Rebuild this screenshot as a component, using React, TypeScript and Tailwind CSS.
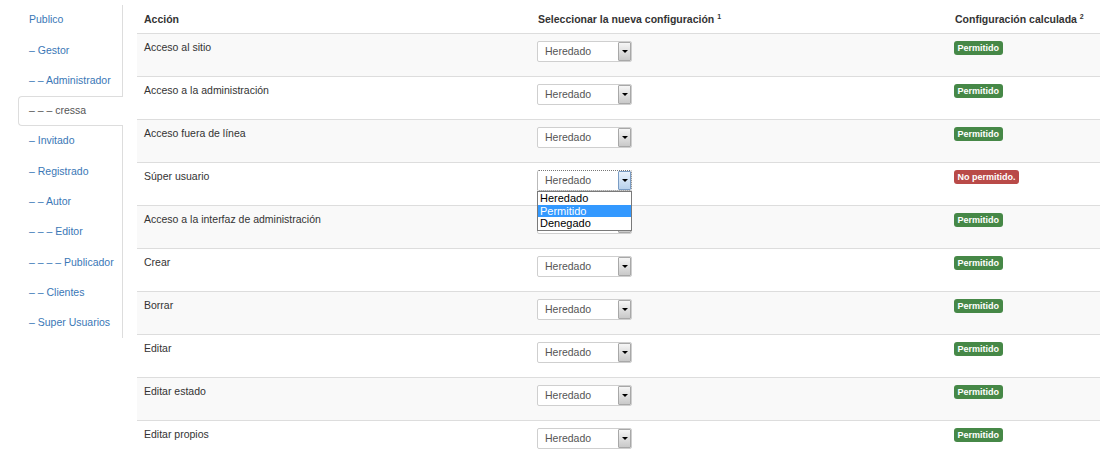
import React from "react";

const groups: { label: string; active?: boolean }[] = [
  { label: "Publico" },
  { label: "– Gestor" },
  { label: "– – Administrador" },
  { label: "– – – cressa", active: true },
  { label: "– Invitado" },
  { label: "– Registrado" },
  { label: "– – Autor" },
  { label: "– – – Editor" },
  { label: "– – – – Publicador" },
  { label: "– – Clientes" },
  { label: "– Super Usuarios" },
];

const rows: { action: string; allowed: boolean; open?: boolean; covered?: boolean }[] = [
  { action: "Acceso al sitio", allowed: true },
  { action: "Acceso a la administración", allowed: true },
  { action: "Acceso fuera de línea", allowed: true },
  { action: "Súper usuario", allowed: false, open: true },
  { action: "Acceso a la interfaz de administración", allowed: true, covered: true },
  { action: "Crear", allowed: true },
  { action: "Borrar", allowed: true },
  { action: "Editar", allowed: true },
  { action: "Editar estado", allowed: true },
  { action: "Editar propios", allowed: true },
];

function Select({ open, covered }: { open?: boolean; covered?: boolean }) {
  return (
    <div
      className={
        "relative w-[95px] h-[21px] bg-white flex items-center rounded-[2px] " +
        (open ? "border border-dotted border-[#777]" : "border border-[#cfcfcf]")
      }
    >
      {!covered && (
        <span className="pl-[7px] text-[#555] text-[10.5px] leading-[13px]">Heredado</span>
      )}
      <div
        className={
          "absolute right-0 top-0 bottom-0 w-[13px] border rounded-[1px] flex items-center justify-center " +
          (open
            ? "border-[#7a9cc4] bg-gradient-to-b from-[#eaf3fc] to-[#b9d2ec]"
            : "border-[#a8a8a8] bg-gradient-to-b from-[#f6f6f6] to-[#c9c9c9]")
        }
      >
        <div className="w-0 h-0 border-x-[3px] border-x-transparent border-t-[3px] border-t-black" />
      </div>
      {open && (
        <div className="absolute left-[-1px] top-[20px] w-[95px] z-10 bg-white border border-[#7a7a7a] text-[11px] text-black">
          <div className="h-[12.7px] leading-[12.7px] pl-[2px]">Heredado</div>
          <div className="h-[12.7px] leading-[12.7px] pl-[2px] bg-[#3399ff] text-white">Permitido</div>
          <div className="h-[12.7px] leading-[12.7px] pl-[2px]">Denegado</div>
        </div>
      )}
    </div>
  );
}

function Badge({ allowed }: { allowed: boolean }) {
  return (
    <span
      className={
        "block h-[14px] px-[3.5px] rounded-[3px] text-white font-bold text-[9px] leading-[14px] " +
        (allowed ? "bg-[#468847]" : "bg-[#b94a48]")
      }
    >
      {allowed ? "Permitido" : "No permitido."}
    </span>
  );
}

export default function App() {
  return (
    <div
      className="w-[1100px] h-[459px] overflow-hidden bg-white flex pl-[18px] text-[#333]"
      style={{ fontFamily: '"Liberation Sans", Arial, Helvetica, sans-serif' }}
    >
      <div className="w-[105px] mt-[5px] self-start border-r border-[#ddd]">
        {groups.map((g) =>
          g.active ? (
            <div
              key={g.label}
              className="relative w-[105px] h-[30.3px] flex items-center pl-[10px] bg-white border border-r-0 border-[#ddd] rounded-l-[4px] text-[#555] text-[10.5px]"
            >
              {g.label}
            </div>
          ) : (
            <div
              key={g.label}
              className="h-[30.3px] flex items-center pl-[11px] text-[#3a77b6] text-[10.5px]"
            >
              {g.label}
            </div>
          )
        )}
      </div>

      <div className="ml-[14px] mt-[5px] w-[963px]">
        <div className="grid grid-cols-[393px_417px_153px] h-[28px] font-bold text-[10.5px] leading-[13px]">
          <div className="pl-[7px] pt-[7.5px]">Acción</div>
          <div className="pl-[8px] pt-[7.5px]">
            Seleccionar la nueva configuración <sup className="text-[7px] font-bold">1</sup>
          </div>
          <div className="pl-[8px] pt-[7.5px]">
            Configuración calculada <sup className="text-[7px] font-bold">2</sup>
          </div>
        </div>
        {rows.map((r, i) => (
          <div
            key={r.action}
            className={
              "grid grid-cols-[393px_417px_153px] h-[43px] border-t border-[#ddd] " +
              (i % 2 === 0 ? "bg-[#f9f9f9]" : "bg-white")
            }
          >
            <div className="pl-[7px] pt-[7px] text-[10.5px] leading-[13px]">{r.action}</div>
            <div className="pl-[7px] pt-[7px]">
              <Select open={r.open} covered={r.covered} />
            </div>
            <div className="pl-[7px] pt-[7px] flex items-start">
              <Badge allowed={r.allowed} />
            </div>
          </div>
        ))}
      </div>
    </div>
  );
}
